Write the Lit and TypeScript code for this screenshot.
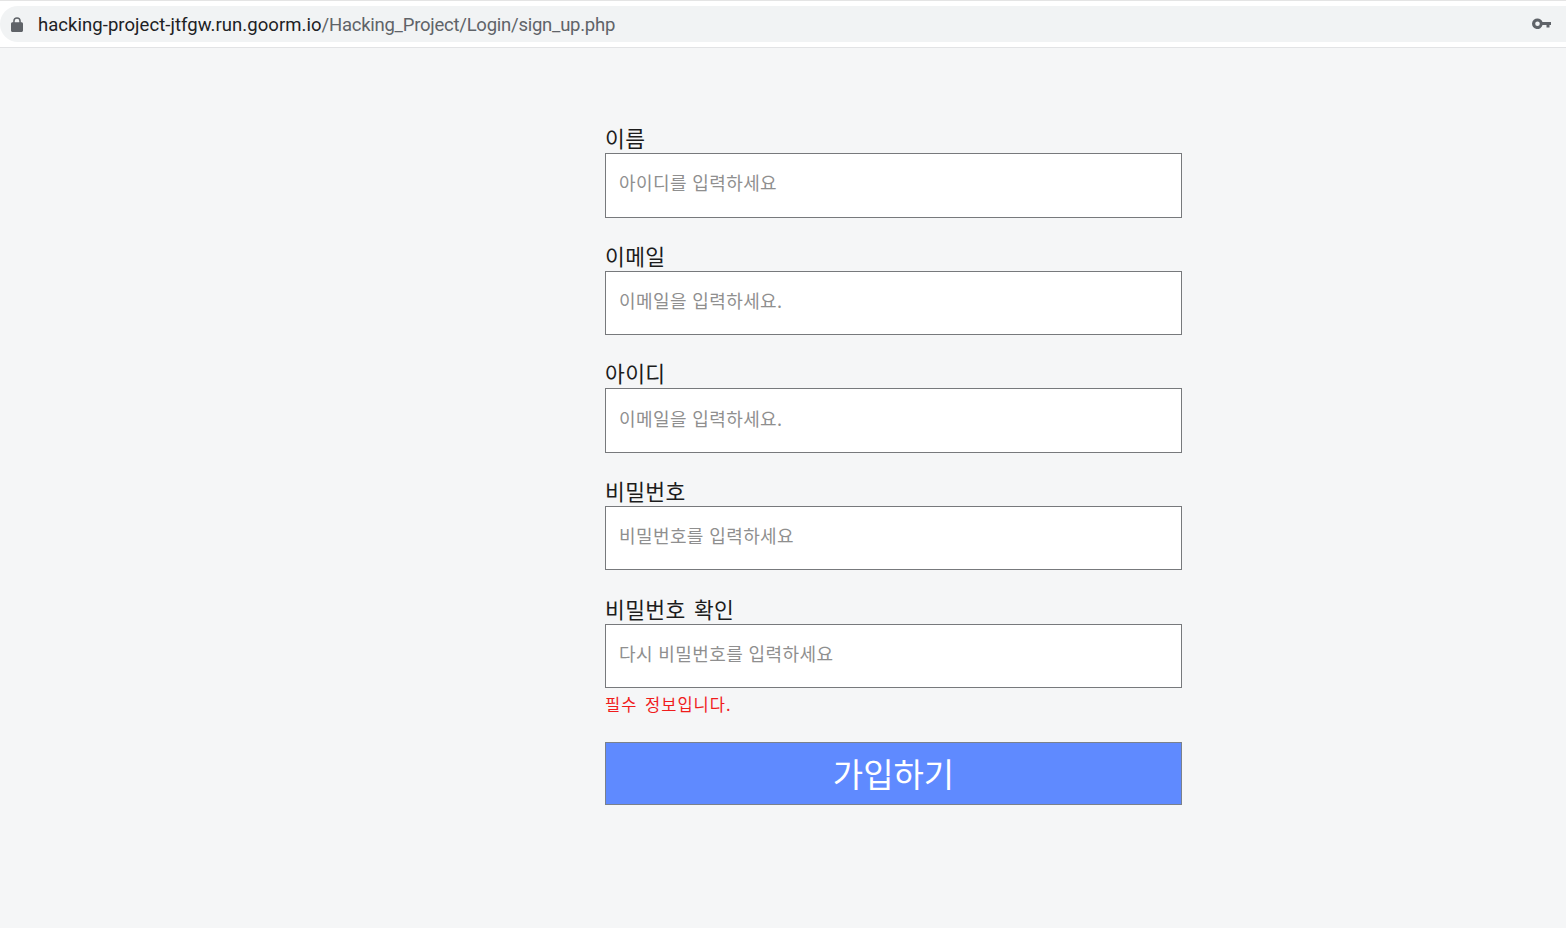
import { LitElement, html, css } from "lit";
import { customElement } from "lit/decorators.js";

const FIELDS = [
  { label: "이름", ph: "아이디를 입력하세요", type: "text" },
  { label: "이메일", ph: "이메일을 입력하세요.", type: "text" },
  { label: "아이디", ph: "이메일을 입력하세요.", type: "text" },
  { label: "비밀번호", ph: "비밀번호를 입력하세요", type: "password" },
  { label: "비밀번호 확인", ph: "다시 비밀번호를 입력하세요", type: "password" },
];

@customElement("app-root")
export class AppRoot extends LitElement {
  static styles = css`
    :host {
      display: block;
      height: 928px;
      background: #f5f6f7;
      font-family: "Noto Sans CJK KR", "Noto Sans", sans-serif;
      overflow: hidden;
    }
    .chrome {
      height: 48px;
      box-sizing: border-box;
      background: #fff;
      border-top: 1px solid #e4e4e4;
      border-bottom: 1px solid #e2e3e5;
      padding-top: 5px;
    }
    .bar {
      height: 36px;
      background: #f1f3f4;
      border-radius: 18px 0 0 18px;
      display: flex;
      align-items: center;
      padding: 0 14px 0 11px;
    }
    .lock { width: 12px; height: 15px; margin-right: 15px; flex: none; }
    .url {
      flex: 1;
      font-family: Roboto, "Liberation Sans", sans-serif;
      font-size: 18.5px;
      letter-spacing: -0.25px;
      line-height: 36px;
      padding-top: 2px;
      color: #5f6368;
      white-space: nowrap;
    }
    .url b { font-weight: 400; color: #202124; letter-spacing: 0.05px; }
    .key { width: 20px; height: 12px; flex: none; }
    form {
      width: 577px;
      margin-left: 605px;
      padding-top: 77.2px;
      display: flex;
      flex-direction: column;
    }
    .field { display: flex; flex-direction: column; height: 117.6px; }
    .field.last { height: auto; }
    label {
      font-size: 21.5px;
      line-height: 26px;
      padding-bottom: 2px;
      letter-spacing: 0.4px;
      word-spacing: 3px;
      color: #1c1c1c;
    }
    input {
      box-sizing: border-box;
      width: 100%;
      height: 64.4px;
      border: 1px solid #77797c;
      background: #fff;
      padding: 0 13px 6px;
      font: inherit;
      font-size: 18px;
      letter-spacing: 0.4px;
      word-spacing: 1px;
      outline: none;
      border-radius: 0;
      margin: 0;
    }
    input::placeholder { color: #8f8f8f; opacity: 1; }
    .err {
      font-size: 16.5px;
      line-height: 22px;
      margin-top: 5px;
      margin-bottom: 2px;
      letter-spacing: 1px;
      word-spacing: 3px;
      color: #f01c1c;
    }
    button {
      margin-top: 25px;
      height: 63.5px;
      border: 1px solid #7a818c;
      background: #5f8aff;
      color: #fff;
      font: inherit;
      font-size: 33px;
      font-weight: 400;
      padding: 0 0 1px;
      border-radius: 0;
    }
  `;

  render() {
    return html`
      <div class="chrome">
        <div class="bar">
          <svg class="lock" viewBox="0 0 12 15" aria-hidden="true">
            <path fill="#5f6368" d="M2.2 5.2V4a3.8 3.8 0 0 1 7.6 0v1.2h.7c.8 0 1.500.7 1.500 1.500v6.800c0 .8-.7 1.500-1.500 1.500h-9C.7 15 0 14.300 0 13.500V6.700c0-.8.7-1.500 1.500-1.500zm1.500 0h4.600V4a2.300 2.300 0 0 0-4.600 0z"/>
          </svg>
          <div class="url"><b>hacking-project-jtfgw.run.goorm.io</b>/Hacking_Project/Login/sign_up.php</div>
          <svg class="key" viewBox="0 0 20 12" aria-hidden="true">
            <path fill="#5f6368" fill-rule="evenodd" d="M5.500 0.500a5.300 5.300 0 0 1 5 3.500H19v3h-1.500v2.500h-3V7h-4a5.300 5.300 0 1 1-5-6.500zm0 3a2.300 2.300 0 1 0 0 4.600 2.300 2.300 0 0 0 0-4.600z"/>
          </svg>
        </div>
      </div>
      <form @submit=${(e: Event) => e.preventDefault()}>
        ${FIELDS.map(
          (f, i) => html`
            <div class="field ${i === FIELDS.length - 1 ? "last" : ""}">
              <label>${f.label}</label>
              <input type=${f.type} placeholder=${f.ph} />
            </div>
          `
        )}
        <div class="err">필수 정보입니다.</div>
        <button type="submit">가입하기</button>
      </form>
    `;
  }
}
